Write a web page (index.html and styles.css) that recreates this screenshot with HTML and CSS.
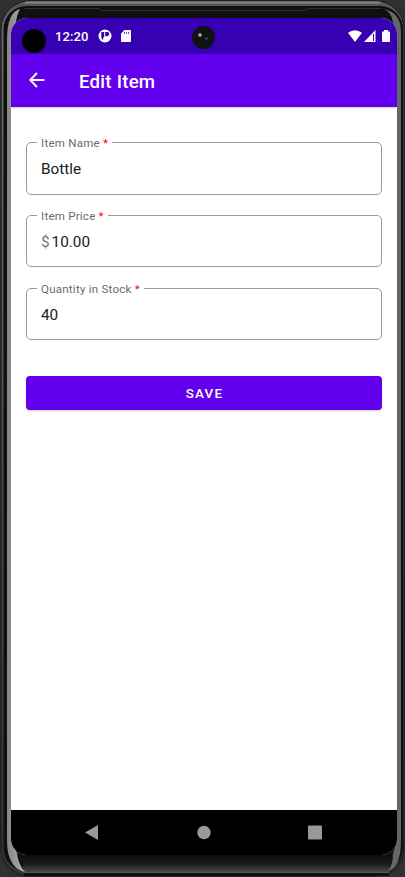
FILE: index.html
```html
<!DOCTYPE html>
<html lang="en">
<head>
<meta charset="utf-8">
<title>Edit Item</title>
<link rel="stylesheet" href="styles.css">
</head>
<body>
<div class="device">
  <svg class="frame" viewBox="0 0 405 877" aria-hidden="true">
    <defs>
      <linearGradient id="top" x1="0" y1="0" x2="0" y2="1">
        <stop offset="0" stop-color="#777"/><stop offset=".004" stop-color="#555"/><stop offset=".03" stop-color="#666"/><stop offset="1" stop-color="#333"/>
      </linearGradient>
      <linearGradient id="bottom" x1="0" y1="0" x2="0" y2="1">
        <stop offset="0" stop-color="#0c0c0c"/><stop offset=".5" stop-color="#191919"/><stop offset="1" stop-color="#484848"/>
      </linearGradient>
      <linearGradient id="side" x1="0" y1="0" x2="1" y2="0">
        <stop offset="0" stop-color="#858585"/><stop offset="1" stop-color="#b0b0b0"/>
      </linearGradient>
    </defs>
    <rect width="405" height="877" fill="#303032"/>
    <rect x="1" y="1" width="403" height="875" rx="28" fill="url(#top)" stroke="#161616" stroke-width="1"/>
    <rect x="3.500" y="6" width="399.500" height="865" rx="23" fill="#101010"/>
    <path d="M25 2.500H380" stroke="#858585" stroke-width="2"/>
    <path d="M20 855H392L389 872H24Z" fill="url(#bottom)"/>
    <path d="M7 40Q7 12 20 9Q17 14 16 22L11 34V840L17 853Q18 864 25 872Q7 868 7 840Z" fill="url(#side)"/>
    <path d="M397 34V840L393 854Q393 864 388 871Q401 868 401 840V32Q401 12 383 9Q391 11 393 22Z" fill="#666"/>
    <path d="M25 8.500H99L102 10.500H305L308 8.500H382" fill="none" stroke="#303030"/>
    <path d="M24 872.500H389" stroke="#555"/>
    <path d="M24 874.500H389" stroke="#111" stroke-width="3"/>
  </svg>
  <main class="screen">
    <header class="status">
      <span class="cutout"></span>
      <span class="time">12:20</span>
      <svg class="notice" viewBox="0 0 14 14"><circle cx="7" cy="7" r="6.500" fill="#fff"/><path d="M3.300 3h2.900v5.600H5.100v2.600A5 5 0 0 1 3.300 8.500ZM7.200 3h2a2.100 2.100 0 0 1 0 4.200h-2Z" fill="#3700b3"/></svg>
      <svg class="sd" viewBox="0 0 10 12"><path d="M3.500 0H9q1 0 1 1v10q0 1-1 1H1q-1 0-1-1V3.500Z" fill="#fff"/><path d="M3.500 2v2M5.500 2v2M7.500 2v2" stroke="#3700b3" stroke-width=".7"/></svg>
      <span class="lens"><i></i><b></b></span>
      <svg class="signals" viewBox="0 0 42 13"><path d="M0 2.700Q7-2.300 14 2.700L7 12Z" fill="#fff"/><path d="M16 12L27.500 0V12Z" fill="#fff"/><path d="M25 4h1v7h-1z" fill="#3700b3"/><path d="M34 2q0-.6.7-.6H36V0h4v1.400h1.300q.7 0 .7.700V11q0 1-1 1h-6q-1 0-1-1Z" fill="#fff"/></svg>
    </header>
    <nav class="appbar">
      <svg class="back" viewBox="0 0 16 16"><path d="M15.300 8H1.500M8 1L1.200 8L8 15" fill="none" stroke="#fff" stroke-width="1.800"/></svg>
      <h1>Edit Item</h1>
    </nav>
    <form class="content">
      <fieldset class="first"><legend>Item Name <em>*</em></legend><span class="value">Bottle</span></fieldset>
      <fieldset><legend>Item Price <em>*</em></legend><span class="value"><small>$</small>10.00</span></fieldset>
      <fieldset><legend>Quantity in Stock <em>*</em></legend><span class="value">40</span></fieldset>
      <button type="button">SAVE</button>
    </form>
    <footer class="navigation">
      <svg viewBox="0 0 386 45"><path d="M74 22.500L87 15V30Z" fill="#999"/><circle cx="193" cy="22.500" r="6.700" fill="#999"/><rect x="297" y="15.500" width="14" height="14" rx="1" fill="#999"/></svg>
    </footer>
  </main>
</div>
</body>
</html>
```
FILE: styles.css
```css
* { box-sizing: border-box; }
body { margin: 0; font-family: Roboto, sans-serif; }
.device { position: relative; width: 405px; height: 877px; padding: 18px 8px 22px 11px; overflow: hidden; }
.frame { position: absolute; inset: 0; width: 405px; height: 877px; }
.screen { position: relative; display: flex; flex-direction: column; height: 837px; overflow: hidden; border-radius: 16px; background: #fff; }
.status { position: relative; display: flex; align-items: center; flex: 0 0 36px; background: #3700b3; color: #fff; }
.cutout { width: 24px; height: 24px; margin: 9px 0 0 11px; border-radius: 50%; background: #000; }
.time { width: 43px; margin-left: 9px; font-size: 13px; font-weight: 500; letter-spacing: .1px; line-height: 16px; padding-top: 1px; }
.notice { width: 14px; height: 14px; }
.sd { width: 10px; height: 12px; margin-left: 9px; }
.lens { position: absolute; left: 181px; top: 8px; width: 23px; height: 23px; border-radius: 50%; background: #101113; }
.lens i { position: absolute; left: 6px; top: 7px; width: 4px; height: 4px; border-radius: 50%; background: radial-gradient(#ccd, #445); }
.lens b { position: absolute; left: 13px; top: 11px; width: 3px; height: 3px; border-radius: 50%; background: #17486b; }
.signals { width: 42px; height: 13px; margin: 0 7px 0 auto; }
.appbar { position: relative; display: flex; align-items: center; flex: 0 0 53px; background: #6200ee; color: #fff; box-shadow: 0 1px 2px #0003; }
.back { width: 16px; height: 16px; margin: 0 0 1px 18px; }
h1 { margin: 2px 0 0 34px; font-size: 18.6px; font-weight: 500; line-height: 24px; letter-spacing: .26px; }
.content { display: flex; flex-direction: column; flex: 1; padding: 27px 15px 0; }
fieldset { min-width: 0; height: 60px; margin: 0 0 13px; padding: 0 14px 0 10px; border: 1px solid #999; border-radius: 5px; color: #212121; }
.first { height: 61px; margin-bottom: 12px; }
legend { height: 16px; padding: 2px 4px 0; color: #6b6b6b; font-size: 11.5px; line-height: 14px; letter-spacing: .25px; }
em { color: #f00; font-style: normal; }
.value { display: flex; margin: 9px 0 0 4px; font-size: 15.3px; line-height: 20px; letter-spacing: 0; }
small { margin-right: 2px; color: #777; font-size: inherit; }
button { height: 34px; margin-top: 23px; padding: 2px 0 0 1px; border: 0; border-radius: 4px; background: #6200ee; box-shadow: 0 1px 2px #0003; color: #fff; font: 500 13.4px/20px Roboto, sans-serif; letter-spacing: 1.2px; }
.navigation { flex: 0 0 45px; background: #000; }
.navigation svg { display: block; width: 386px; height: 45px; }
```
